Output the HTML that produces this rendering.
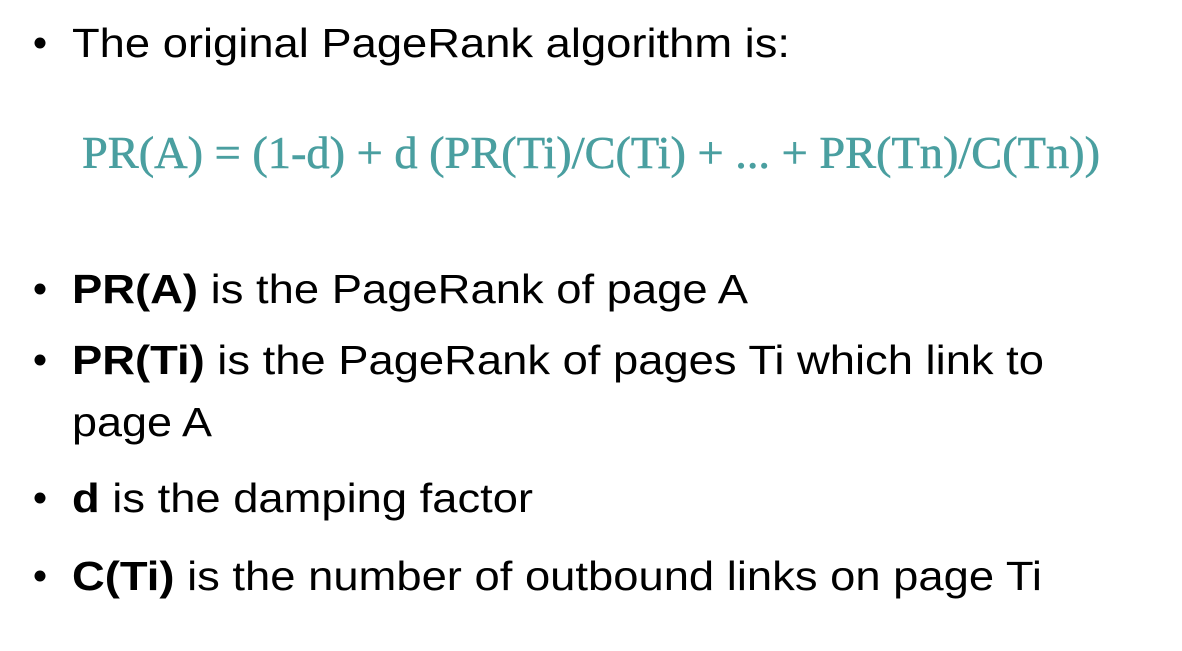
<!DOCTYPE html>
<html><head><meta charset="utf-8"><style>
html,body{margin:0;padding:0;background:#fff;}
svg{display:block}
.t{font-family:"Liberation Sans",Arial,sans-serif;font-size:41px;fill:#000}
.b{font-weight:bold}
.f{font-family:"Liberation Serif","DejaVu Serif",serif;font-size:46px;fill:#4a9fa0;stroke:#4a9fa0;stroke-width:0.6}
</style></head><body>
<svg width="1182" height="651" viewBox="0 0 1182 651" xmlns="http://www.w3.org/2000/svg">
<rect width="1182" height="651" fill="#fff"/>
<g fill="#000">
<circle cx="40" cy="43" r="5.5"/>
<circle cx="40" cy="289" r="5.5"/>
<circle cx="40" cy="360" r="5.5"/>
<circle cx="40" cy="498" r="5.5"/>
<circle cx="40" cy="576" r="5.5"/>
</g>
<text class="t" x="72" y="57" textLength="718" lengthAdjust="spacingAndGlyphs">The original PageRank algorithm is:</text>
<text class="f" x="82" y="168" textLength="1018" lengthAdjust="spacingAndGlyphs">PR(A) = (1-d) + d (PR(Ti)/C(Ti) + ... + PR(Tn)/C(Tn))</text>
<text class="t" x="72" y="303" textLength="676" lengthAdjust="spacingAndGlyphs"><tspan class="b">PR(A)</tspan> is the PageRank of page A</text>
<text class="t" x="72" y="374" textLength="972" lengthAdjust="spacingAndGlyphs"><tspan class="b">PR(Ti)</tspan> is the PageRank of pages Ti which link to</text>
<text class="t" x="72" y="436" textLength="140" lengthAdjust="spacingAndGlyphs">page A</text>
<text class="t" x="72" y="512" textLength="461" lengthAdjust="spacingAndGlyphs"><tspan class="b">d</tspan> is the damping factor</text>
<text class="t" x="72" y="590" textLength="970" lengthAdjust="spacingAndGlyphs"><tspan class="b">C(Ti)</tspan> is the number of outbound links on page Ti</text>
</svg>
</body></html>
